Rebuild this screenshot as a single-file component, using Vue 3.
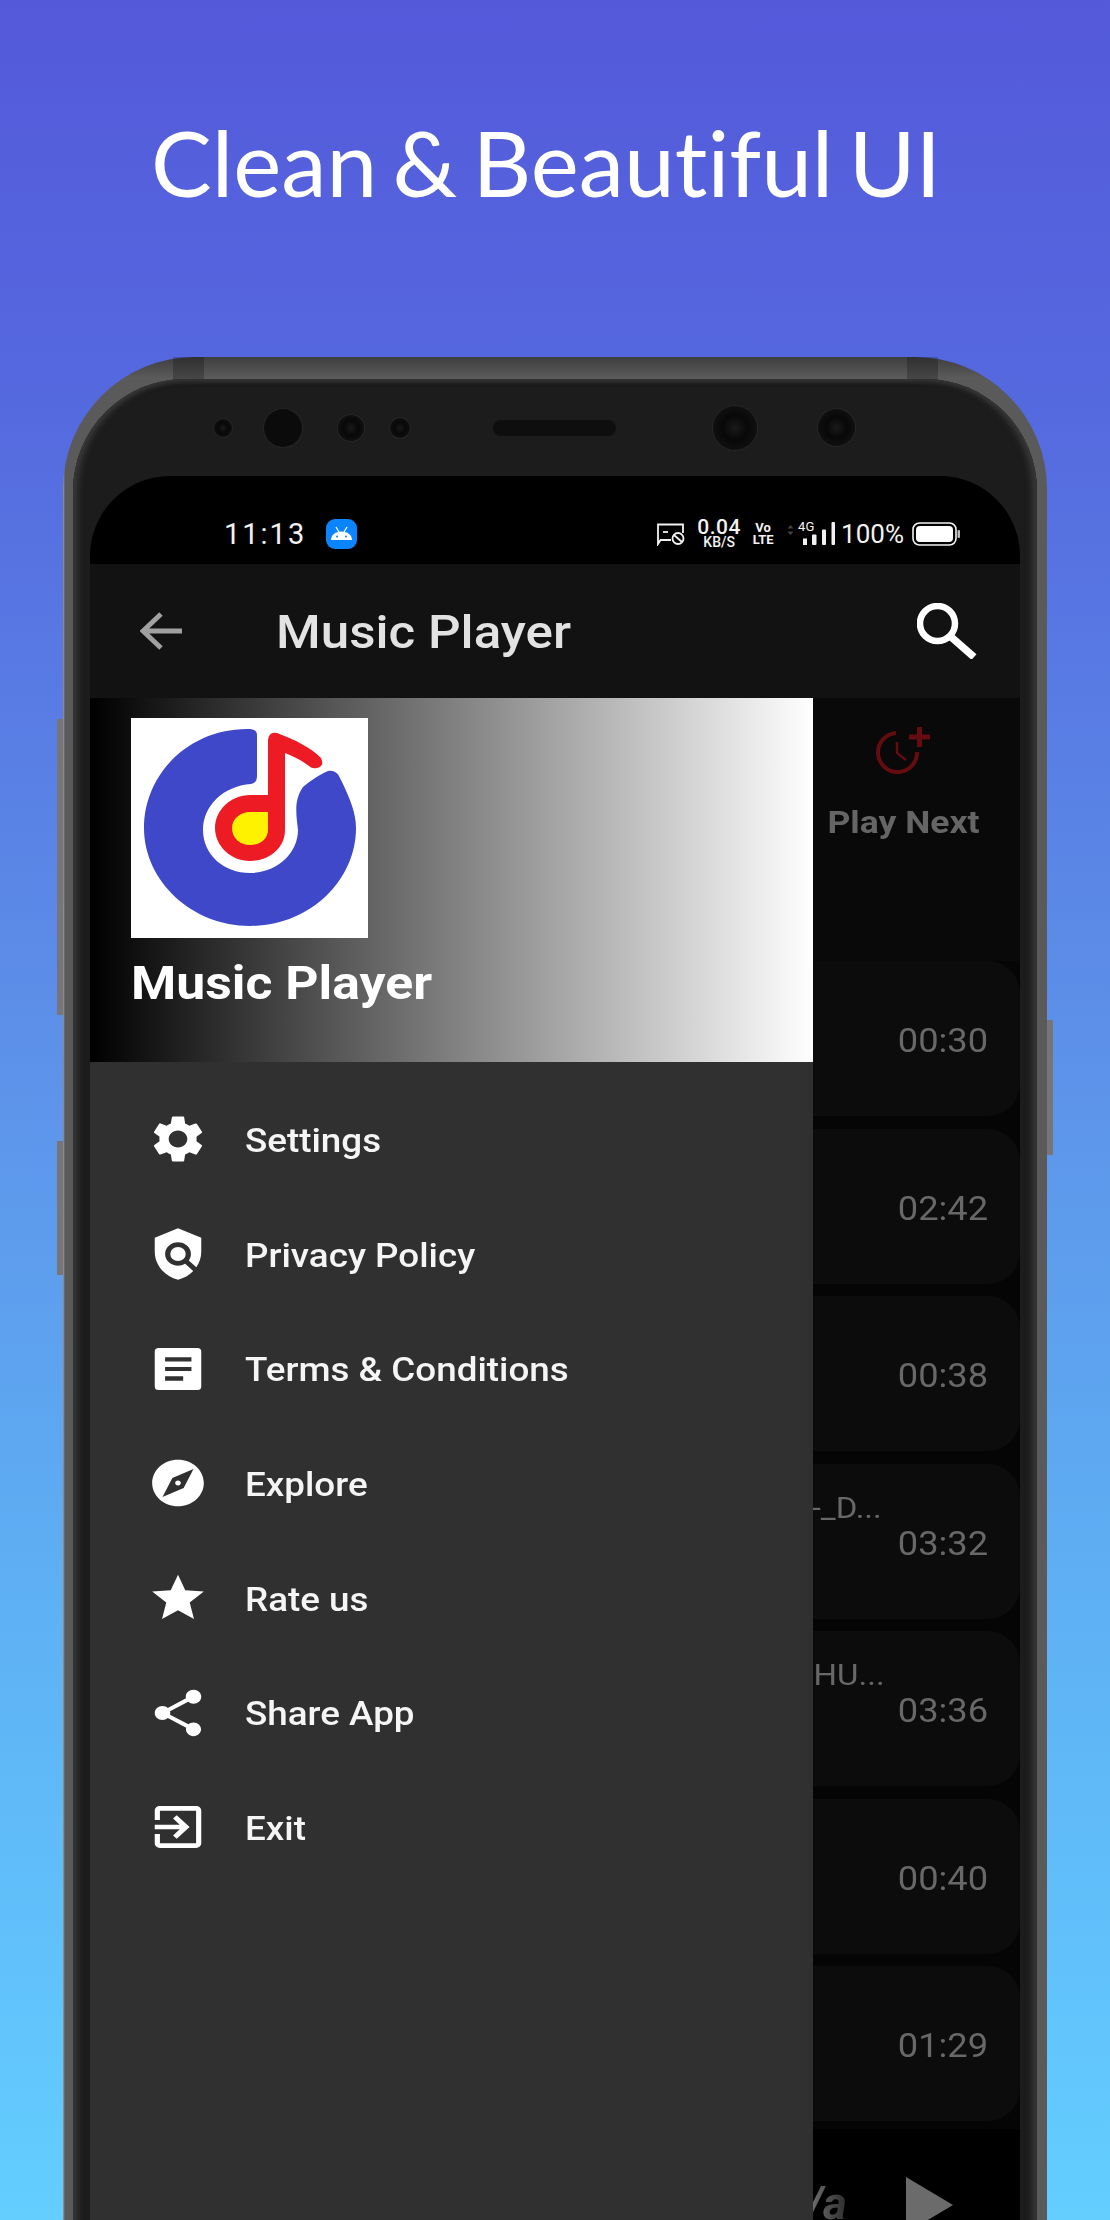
<script setup>
const menu = [
  { label: 'Settings', d: 'M19.14 12.94c.04-.3.06-.61.06-.94 0-.32-.02-.64-.07-.94l2.03-1.58c.18-.14.23-.41.12-.61l-1.92-3.32c-.12-.22-.37-.29-.59-.22l-2.39.96c-.5-.38-1.03-.7-1.62-.94l-.36-2.54c-.04-.24-.24-.41-.48-.41h-3.84c-.24 0-.43.17-.47.41l-.36 2.54c-.59.24-1.13.57-1.62.94l-2.39-.96c-.22-.08-.47 0-.59.22L2.74 8.87c-.12.21-.08.47.12.61l2.03 1.58c-.05.3-.09.63-.09.94s.02.64.07.94l-2.03 1.58c-.18.14-.23.41-.12.61l1.92 3.32c.12.22.37.29.59.22l2.39-.96c.5.38 1.03.7 1.62.94l.36 2.54c.05.24.24.41.48.41h3.84c.24 0 .44-.17.47-.41l.36-2.54c.59-.24 1.13-.56 1.62-.94l2.39.96c.22.08.47 0 .59-.22l1.92-3.32c.12-.22.07-.47-.12-.61l-2.01-1.58zM12 15.6c-1.98 0-3.6-1.62-3.6-3.6s1.62-3.6 3.6-3.6 3.6 1.62 3.6 3.6-1.62 3.6-3.6 3.6z' },
  { label: 'Privacy Policy', d: 'M21 5l-9-4L3 5v6c0 5.55 3.84 10.74 9 12 2.3-.56 4.33-1.9 5.88-3.71l-3.12-3.12c-1.94 1.29-4.58 1.07-6.29-.64-1.95-1.95-1.95-5.12 0-7.07 1.95-1.95 5.12-1.95 7.07 0 1.71 1.71 1.92 4.35.64 6.29l2.9 2.9C20.29 15.69 21 13.38 21 11V5zM12 9a3 3 0 1 0 0 6 3 3 0 1 0 0-6z' },
  { label: 'Terms & Conditions', d: 'M4.500 3h15a1.500 1.500 0 0 1 1.500 1.500v15a1.500 1.500 0 0 1-1.500 1.500h-15A1.500 1.500 0 0 1 3 19.500v-15A1.500 1.500 0 0 1 4.500 3zM7 7v1.800h10.200V7zM7 11.100v1.800h10.200v-1.800zM7 15.100V17h7v-1.900z' },
  { label: 'Explore', d: 'M12 2C6.48 2 2 6.48 2 12s4.48 10 10 10 10-4.48 10-10S17.52 2 12 2zm2.19 12.19L6 18l3.81-8.19L18 6l-3.81 8.19zM12 10.9c-.61 0-1.1.49-1.1 1.1s.49 1.1 1.1 1.1c.61 0 1.1-.49 1.1-1.1s-.49-1.1-1.1-1.1z' },
  { label: 'Rate us', d: 'M12 17.27L18.18 21l-1.64-7.03L22 9.24l-7.19-.61L12 2 9.19 8.63 2 9.24l5.46 4.73L5.82 21z' },
  { label: 'Share App', d: 'M18 16.08c-.76 0-1.44.3-1.96.77L8.91 12.7c.05-.23.09-.46.09-.7s-.04-.47-.09-.7l7.05-4.11c.54.5 1.25.81 2.04.81 1.66 0 3-1.34 3-3s-1.34-3-3-3-3 1.34-3 3c0 .24.04.47.09.7L8.04 9.81C7.5 9.31 6.79 9 6 9c-1.66 0-3 1.34-3 3s1.34 3 3 3c.79 0 1.5-.31 2.04-.81l7.12 4.16c-.05.21-.08.43-.08.65 0 1.61 1.31 2.92 2.92 2.92 1.61 0 2.92-1.31 2.92-2.92s-1.31-2.92-2.92-2.92z' },
  { label: 'Exit', d: 'M10.09 15.59L11.5 17l5-5-5-5-1.41 1.41L12.67 11H3v2h9.67l-2.58 2.59zM19 3H5c-1.11 0-2 .9-2 2v4h2V5h14v14H5v-4H3v4c0 1.1.89 2 2 2h14c1.1 0 2-.9 2-2V5c0-1.1-.9-2-2-2z' },
]

const songs = [
  { id: 1, title: '', time: '00:30' },
  { id: 2, title: '', time: '02:42' },
  { id: 3, title: '', time: '00:38' },
  { id: 4, title: '-_D...', time: '03:32' },
  { id: 5, title: 'HU...', time: '03:36' },
  { id: 6, title: '', time: '00:40' },
  { id: 7, title: '', time: '01:29' },
]
</script>

<template>
  <div class="page">
    <h1 class="headline">Clean &amp; Beautiful UI</h1>

    <div class="phone">
      <span class="btn btn-left-1"></span>
      <span class="btn btn-left-2"></span>
      <span class="btn btn-right"></span>
      <span class="seam seam-left"></span>
      <span class="seam seam-right"></span>

      <div class="bezel">
        <div class="sensors">
          <span class="dot s1"></span>
          <span class="dot s2"></span>
          <span class="dot s3"></span>
          <span class="dot s4"></span>
          <span class="speaker"></span>
          <span class="dot cam1"></span>
          <span class="dot cam2"></span>
        </div>

        <div class="screen">
          <div class="statusbar">
            <span class="clock">11:13</span>
            <svg class="android" viewBox="0 0 31 30">
              <rect width="31" height="30" rx="9" fill="#0a84ff" />
              <path d="M5 21c0-5 4.500-8.500 10.500-8.500S26 16 26 21z" fill="#fff" />
              <path d="M10 8l3 5M21 8l-3 5" stroke="#fff" stroke-width="1.300" />
              <circle cx="11" cy="17.500" r="1" fill="#0a84ff" />
              <circle cx="20" cy="17.500" r="1" fill="#0a84ff" />
            </svg>
            <div class="status-right">
              <svg class="msg" viewBox="0 0 28 23" fill="none" stroke="#f2f2f2" stroke-width="1.800">
                <path d="M14 17H3.500L1 21V1.500h25V10" />
                <path d="M6 9h5" />
                <circle cx="21" cy="15.500" r="5.500" />
                <path d="M17 12l8 7" />
              </svg>
              <div class="speed">
                <span class="speed-num">0.04</span>
                <span class="speed-unit">KB/S</span>
              </div>
              <div class="volte"><span>Vo</span><span>LTE</span></div>
              <div class="signal">
                <svg viewBox="0 0 48 24" width="48" height="24">
                  <path d="M3.500 3L6.500 6.500H.5zM3.500 13L6.500 9.500H.5z" fill="#444" />
                  <rect x="16" y="16.500" width="4" height="6.500" fill="#f2f2f2" />
                  <rect x="25" y="12.500" width="4.500" height="10.500" rx="1" fill="#f2f2f2" />
                  <rect x="35" y="7.500" width="4" height="15.500" rx="1" fill="#f2f2f2" />
                  <rect x="44.500" y="0" width="3.500" height="23" rx="1" fill="#f2f2f2" />
                </svg>
                <span class="net">4G</span>
              </div>
              <span class="percent">100%</span>
              <svg class="battery" viewBox="0 0 48 24">
                <rect x="1" y="1" width="43" height="22" rx="6.500" fill="none" stroke="#f2f2f2" stroke-width="1.600" />
                <rect x="4" y="4" width="37" height="16" rx="4" fill="#fff" />
                <rect x="45.500" y="8" width="2.500" height="8" rx="1" fill="#bbb" />
              </svg>
            </div>
          </div>

          <header class="appbar">
            <svg class="back" viewBox="0 0 42 38" fill="none" stroke="#a0a0a0" stroke-width="5">
              <path d="M21 2L3 19l18 17M3 19h39" />
            </svg>
            <span class="appbar-title">Music Player</span>
            <svg class="search" viewBox="0 0 60 56" fill="none" stroke="#fff">
              <circle cx="20.500" cy="20.500" r="17.500" stroke-width="6.500" />
              <path d="M33 33l24 21" stroke-width="7.500" />
            </svg>
          </header>

          <div class="body">
            <div class="tabs">
              <div class="tab">
                <svg class="tab-icon" viewBox="0 0 54 48" fill="none" stroke="#640c10" stroke-width="4">
                  <path d="M41 25a19.500 19.500 0 1 1-21-19" />
                  <path d="M21 15v11l9 7" stroke-width="2.500" />
                  <path d="M33 10h21M43.500 0v20" stroke-width="5" />
                </svg>
                <span class="tab-label">Play Next</span>
              </div>
            </div>

            <div class="list">
              <div v-for="song in songs" :key="song.id" class="row">
                <span v-if="song.title" class="row-title" :class="{ wide: song.id === 5 }">{{ song.title }}</span>
                <span class="row-time">{{ song.time }}</span>
              </div>
            </div>

            <div class="player">
              <span class="player-title">/a</span>
              <span class="play"></span>
            </div>

            <aside class="drawer">
              <div class="drawer-head">
                <svg class="logo" viewBox="0 0 237 220">
                  <rect width="237" height="220" fill="#fff" />
                  <path d="M126 17V58Q126 65 120 66C92 68 72 88 72 112C72 137 93 155 119 155C146 155 167 135 167 112C165 95 163 82 172 69C180 62 190 56 197 53C203 52 207 55 209 60C219 80 225 95 225 110C225 163 178 208 119 208C61 208 13 163 13 110C13 56 58 11 116 11C122 11 126 12 126 17Z" fill="#3e48c9" />
                  <path d="M137 77V22Q138 13 146 15C165 22 180 30 190 40Q194 48 186 50Q181 51 178 48C170 42 162 38 154 35V112C154 130 138 143 119 143C100 143 84 128 84 110C84 92 100 77 119 77Z" fill="#ed1c24" />
                  <path d="M137 94V112C137 121 129 127 119 127C109 127 101 120 101 110C101 101 109 94 119 94Z" fill="#fff200" />
                </svg>
                <div class="drawer-title">Music Player</div>
              </div>
              <nav class="menu">
                <div v-for="item in menu" :key="item.label" class="menu-item">
                  <svg class="menu-icon" viewBox="0 0 24 24" preserveAspectRatio="none" fill="#fff" fill-rule="evenodd">
                    <path :d="item.d" />
                  </svg>
                  <span class="menu-label">{{ item.label }}</span>
                </div>
              </nav>
            </aside>
          </div>
        </div>
      </div>
    </div>
  </div>
</template>

<style>
html, body {
  margin: 0;
  padding: 0;
}
</style>

<style scoped>
.page {
  width: 1110px;
  height: 2220px;
  overflow: hidden;
  background: linear-gradient(180deg, #5459da 0%, #5569df 18%, #5d95ea 50%, #5eb0f4 72%, #63ceff 100%);
  font-family: Roboto, "Liberation Sans", sans-serif;
}
.headline {
  margin: 0;
  height: 357px;
  padding: 107px 18px 0 0;
  box-sizing: border-box;
  text-align: center;
  font-family: Lato, sans-serif;
  font-weight: 400;
  font-size: 91px;
  line-height: 110px;
  word-spacing: -8px;
  font-variant-ligatures: none;
  color: #fff;
}

.phone {
  position: relative;
  width: 984px;
  height: 1900px;
  margin-left: 63px;
  padding: 22px 10px 0;
  box-sizing: border-box;
  border-radius: 132px 132px 0 0;
  background:
    linear-gradient(180deg, #3e3e3e 0, #5c5c5c 22px, transparent 22px),
    linear-gradient(90deg, #9a9a9a 0, #5a5a5a 2px, #5a5a5a 100%);
}
.btn {
  position: absolute;
  width: 6px;
  background: #77757a;
}
.btn-left-1 { left: -6px; top: 362px; height: 296px; }
.btn-left-2 { left: -6px; top: 784px; height: 134px; }
.btn-right { right: -6px; top: 663px; height: 135px; }
.seam {
  position: absolute;
  top: 0;
  width: 31px;
  height: 22px;
  background: rgba(0, 0, 0, 0.22);
}
.seam-left { left: 110px; }
.seam-right { right: 109px; }

.bezel {
  height: 100%;
  padding: 0 17px 0 17px;
  box-sizing: border-box;
  border-radius: 112px 112px 0 0;
  background: #1c1c1c;
  box-shadow: inset 5px 0 6px #383838, inset -5px 0 6px #383838, inset 0 3px 4px #2a2a2a;
}
.sensors {
  display: flex;
  align-items: center;
  height: 97px;
}
.dot {
  flex: none;
  border-radius: 50%;
  background: radial-gradient(circle, #1a1a1a 0, #080808 40%, #111 75%);
  box-shadow: 0 0 0 1px #262626;
}
.s1 { width: 18px; height: 18px; margin-left: 124px; }
.s2 { width: 38px; height: 38px; margin-left: 32px; background: #0b0b0b; }
.s3 { width: 26px; height: 26px; margin-left: 36px; }
.s4 { width: 20px; height: 20px; margin-left: 26px; }
.speaker {
  flex: none;
  width: 123px;
  height: 16px;
  margin-left: 83px;
  border-radius: 8px;
  background: #0e0e0e;
}
.cam1 { width: 44px; height: 44px; margin-left: 97px; }
.cam2 { width: 37px; height: 37px; margin-left: 61px; }

.screen {
  height: 1744px;
  border-radius: 80px 80px 0 0;
  overflow: hidden;
  background: #000;
}

.statusbar {
  display: flex;
  align-items: center;
  height: 88px;
  padding: 28px 59px 0 134px;
  box-sizing: border-box;
  color: #f2f2f2;
}
.clock {
  font-size: 29px;
  font-weight: 400;
  letter-spacing: 2px;
}
.android {
  width: 31px;
  height: 30px;
  margin-left: 20px;
}
.status-right {
  display: flex;
  align-items: center;
  margin-left: auto;
}
.msg {
  width: 28px;
  height: 23px;
}
.speed {
  display: flex;
  flex-direction: column;
  align-items: center;
  width: 46px;
  margin-left: 11px;
}
.speed-num {
  font-size: 21px;
  font-weight: 500;
  letter-spacing: 0.5px;
  line-height: 17px;
}
.speed-unit {
  font-size: 14px;
  font-weight: 500;
  line-height: 13px;
}
.volte {
  display: flex;
  flex-direction: column;
  align-items: center;
  width: 20px;
  margin-left: 11px;
  font-size: 13px;
  font-weight: 700;
  line-height: 12px;
}
.signal {
  position: relative;
  width: 48px;
  height: 24px;
  margin-left: 14px;
}
.net {
  position: absolute;
  left: 10px;
  top: -2px;
  font-size: 13px;
  line-height: 14px;
  background: #000;
  padding: 0 1px;
}
.percent {
  margin-left: 6px;
  font-size: 26px;
  line-height: 24px;
}
.battery {
  width: 50px;
  height: 24px;
  margin-left: 7px;
}

/* the reference is about 10% wider than tall, so the text is stretched too */
.appbar-title,
.drawer-title {
  display: inline-block;
  transform: scaleX(1.1);
  transform-origin: left center;
}
.menu-label {
  display: inline-block;
  transform: scaleX(1.115);
  transform-origin: left center;
}
.row-title,
.row-time {
  display: inline-block;
  transform: scaleX(1.1);
  transform-origin: right center;
}
.tab-label {
  display: inline-block;
  transform: scaleX(1.11);
}

.appbar {
  display: flex;
  align-items: center;
  height: 134px;
  padding: 0 43px 0 50px;
  box-sizing: border-box;
  background: #121212;
}
.back {
  width: 42px;
  height: 38px;
}
.appbar-title {
  margin-left: 94px;
  margin-top: 2px;
  font-size: 46.5px;
  font-weight: 500;
  color: #e2e2e2;
}
.search {
  width: 60px;
  height: 56px;
  margin-left: auto;
}

.body {
  position: relative;
  height: 1522px;
  background: #050505;
}
.tabs {
  display: flex;
  justify-content: flex-end;
  height: 263px;
  padding: 29px 48px 0 0;
  box-sizing: border-box;
  background: #090909;
}
.tab {
  display: flex;
  flex-direction: column;
  align-items: center;
  font-size: 32px;
  font-weight: 700;
  color: #656565;
}
.tab-icon {
  width: 54px;
  height: 48px;
  margin-bottom: 28px;
}
.list {
  display: flex;
  flex-direction: column;
  gap: 12.5px;
}
.row {
  display: flex;
  align-items: center;
  justify-content: flex-end;
  height: 155px;
  padding-right: 32px;
  box-sizing: border-box;
  border-radius: 32px;
  background: #0c0c0c;
  color: #686868;
}
.row-title {
  align-self: flex-start;
  margin-top: 26px;
  margin-right: 24px;
  font-size: 30px;
}
.row-title.wide {
  margin-right: 21px;
}
.row-time {
  margin-top: 4px;
  font-size: 33px;
}
.player {
  display: flex;
  align-items: flex-start;
  height: 100px;
  margin-top: 8px;
  padding: 48px 67px 0 0;
  box-sizing: border-box;
  justify-content: flex-end;
  background: #000;
}
.player-title {
  margin-right: 59px;
  font-size: 46px;
  line-height: 52px;
  font-weight: 700;
  font-style: italic;
  background: linear-gradient(90deg, #777, #2c2c2c);
  -webkit-background-clip: text;
  background-clip: text;
  color: transparent;
}
.play {
  width: 0;
  height: 0;
  border-left: 47px solid #6b6b6b;
  border-top: 28px solid transparent;
  border-bottom: 28px solid transparent;
}

.drawer {
  position: absolute;
  left: 0;
  top: 0;
  bottom: 0;
  width: 723px;
  background: #303030;
}
.drawer-head {
  height: 364px;
  padding: 20px 0 0 41px;
  box-sizing: border-box;
  background: linear-gradient(90deg, #000, #fff);
}
.logo {
  display: block;
  width: 237px;
  height: 220px;
}
.drawer-title {
  margin-top: 17px;
  font-size: 47px;
  line-height: 56px;
  font-weight: 700;
  color: #fff;
}
.menu {
  padding: 20px 0 0 56.5px;
}
.menu-item {
  display: flex;
  align-items: center;
  gap: 36.5px;
  height: 114.7px;
  font-size: 33px;
  font-weight: 500;
  color: #f5f5f5;
}
.menu-label {
  margin-top: 2px;
}
.menu-icon {
  flex: none;
  width: 62px;
  height: 56px;
}
</style>
